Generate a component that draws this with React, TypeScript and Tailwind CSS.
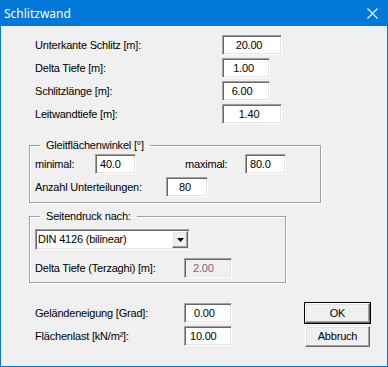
import React from 'react';
import type { FC, ReactNode } from 'react';

const FONT = "font-['Liberation_Sans',Arial,sans-serif] text-[11px] tracking-[-0.2px] leading-[13px]";

const sunken =
  'border border-t-[#a0a0a0] border-l-[#a0a0a0] border-b-white border-r-white shadow-[inset_1px_1px_0_#696969,inset_-1px_-1px_0_#e3e3e3]';

const raised =
  'border border-t-white border-l-white border-b-[#696969] border-r-[#696969] shadow-[inset_-1px_-1px_0_#a0a0a0,inset_1px_1px_0_#e3e3e3]';

type BoxProps = { value: string; width: string; align: string; disabled?: boolean };

const Box: FC<BoxProps> = ({ value, width, align, disabled }) => (
  <div
    className={`${sunken} ${width} ${align} flex h-[20px] shrink-0 items-center ${
      disabled ? 'bg-[#f0f0f0] text-[#6d6d6d]' : 'bg-white text-black'
    }`}
  >
    {value}
  </div>
);

const Row: FC<{ label: string; labelW: string; children: ReactNode }> = ({ label, labelW, children }) => (
  <div className="flex h-[20px] items-center">
    <span className={`${labelW} shrink-0`}>{label}</span>
    {children}
  </div>
);

const Group: FC<{ title: string; width: string; pad: string; children: ReactNode }> = ({
  title,
  width,
  pad,
  children,
}) => (
  <fieldset
    className={`${width} ${pad} border border-[#a0a0a0] shadow-[inset_1px_1px_0_#fff,1px_1px_0_#fff]`}
  >
    <legend className="ml-[5px] px-[6px] leading-[13px]">{title}</legend>
    {children}
  </fieldset>
);

export default function App() {
  return (
    <div className={`${FONT} flex h-[367px] w-[388px] flex-col border border-t-0 border-[#0078d7] bg-[#f0f0f0] text-black`}>
      <div className="flex h-[26px] shrink-0 items-center justify-between bg-[#0078d7] text-white">
        <span className="ml-[3px] font-['Noto_Sans',sans-serif] text-[12px] tracking-normal">Schlitzwand</span>
        <svg width="11" height="11" viewBox="0 0 11 11" className="mr-[9px]">
          <path d="M0.5 0.5L10.5 10.5M10.5 0.5L0.5 10.5" stroke="#fff" strokeWidth="1.1" />
        </svg>
      </div>

      <div className="flex flex-col pl-[28px]">
        <div className="ml-[6px] mt-[9px] flex flex-col gap-[3px]">
          <Row label="Unterkante Schlitz [m]:" labelW="w-[187px]">
            <Box value="20.00" width="w-[60px]" align="justify-center pr-[6px]" />
          </Row>
          <Row label="Delta Tiefe [m]:" labelW="w-[187px]">
            <Box value="1.00" width="w-[48px]" align="justify-center pr-[5px]" />
          </Row>
          <Row label="Schlitzlänge [m]:" labelW="w-[187px]">
            <Box value="6.00" width="w-[48px]" align="justify-center pr-[8px]" />
          </Row>
          <Row label="Leitwandtiefe [m]:" labelW="w-[187px]">
            <Box value="1.40" width="w-[60px]" align="justify-center pr-[6px]" />
          </Row>
        </div>

        <div className="mt-[15px]">
          <Group title="Gleitflächenwinkel [°]" width="w-[292px]" pad="pl-[5px] pt-[2px] pb-[5px]">
            <div className="flex flex-col gap-[3px]">
              <div className="flex h-[20px] items-center">
                <span className="w-[60px] shrink-0">minimal:</span>
                <Box value="40.0" width="w-[41px]" align="pl-[4px]" />
                <span className="ml-[49px] w-[60px] shrink-0">maximal:</span>
                <Box value="80.0" width="w-[41px]" align="pl-[4px]" />
              </div>
              <Row label="Anzahl Unterteilungen:" labelW="w-[131px]">
                <Box value="80" width="w-[42px]" align="pl-[12px]" />
              </Row>
            </div>
          </Group>
        </div>

        <div className="mt-[7px]">
          <Group title="Seitendruck nach:" width="w-[257px]" pad="pl-[5px] pt-[6px] pb-[4px]">
            <div className={`${sunken} flex h-[21px] w-[155px] items-center justify-between bg-white`}>
              <span className="pl-[2px]">DIN 4126 (bilinear)</span>
              <div className={`${raised} mr-[1px] flex h-[17px] w-[16px] items-center justify-center bg-[#f0f0f0]`}>
                <svg width="7" height="4" viewBox="0 0 7 4">
                  <path d="M0 0H7L3.5 4Z" fill="#000" />
                </svg>
              </div>
            </div>
            <div className="mt-[8px]">
              <Row label="Delta Tiefe (Terzaghi) [m]:" labelW="w-[149px]">
                <Box value="2.00" width="w-[48px]" align="pl-[8px]" disabled />
              </Row>
            </div>
          </Group>
        </div>

        <div className="mt-[19px] flex items-start">
          <div className="ml-[6px] flex flex-col gap-[3px] pt-[1px]">
            <Row label="Geländeneigung [Grad]:" labelW="w-[149px]">
              <Box value="0.00" width="w-[48px]" align="pl-[9px]" />
            </Row>
            <Row label="Flächenlast [kN/m²]:" labelW="w-[149px]">
              <Box value="10.00" width="w-[48px]" align="pl-[5px]" />
            </Row>
          </div>
          <div className="ml-[72px] flex flex-col gap-[2px]">
            <div className="h-[22px] w-[67px] border border-black">
              <div className={`${raised} flex h-full w-full items-center justify-center`}>OK</div>
            </div>
            <div className={`${raised} ml-[1px] flex h-[21px] w-[65px] items-center justify-center`}>Abbruch</div>
          </div>
        </div>
      </div>
    </div>
  );
}
